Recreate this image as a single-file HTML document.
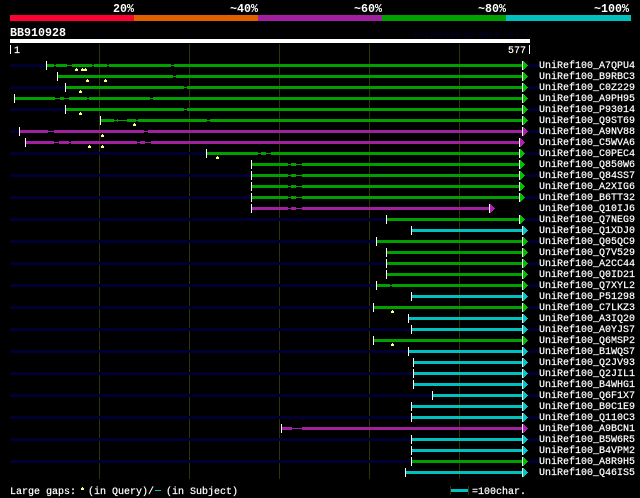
<!DOCTYPE html>
<html><head><meta charset="utf-8"><style>
html,body{margin:0;padding:0;background:#000;width:640px;height:498px;overflow:hidden}
svg{display:block;position:absolute;left:0;top:0}
text{font-family:"Liberation Mono",monospace;font-size:10px;fill:#fff;stroke:#fff;stroke-width:.2px}
text.b{font-weight:bold;font-size:11.67px;stroke:none}
.N{fill:#000033}.G{fill:#00a000}.P{fill:#a020a0}.C{fill:#00c0c0}
.g{fill:#00c000}.p{fill:#b020b0}.c{fill:#00c8c8}
</style></head><body>
<svg width="640" height="498" viewBox="0 0 640 498" xmlns="http://www.w3.org/2000/svg">
<defs>
<rect id="k" y="-3" width="1" height="9" fill="#fff"/>
<path id="t" d="M0-3H1V-2H2V-1H3V0H4V1H5V2H4V3H3V4H2V5H1V6H0z"/>
<path id="w" d="M1 4H2V5H3V7H0V5H1z" fill="#ffff70"/>
</defs>
<rect x="10" y="15" width="124" height="6" fill="#ff0033"/>
<rect x="134" y="15" width="124" height="6" fill="#e06000"/>
<rect x="258" y="15" width="124" height="6" fill="#a020a0"/>
<rect x="382" y="15" width="124" height="6" fill="#00a000"/>
<rect x="506" y="15" width="125" height="6" fill="#00c0c0"/>
<text class="b" x="113" y="12">20%</text>
<text class="b" x="230" y="12">~40%</text>
<text class="b" x="354" y="12">~60%</text>
<text class="b" x="478" y="12">~80%</text>
<text class="b" x="594" y="12">~100%</text>
<text class="b" x="10" y="36">BB910928</text>
<text x="414" y="37" style="font-size:8.33px;fill:#000033;stroke:none">AlignView.pm Beta rel.7</text>
<rect x="10" y="39" width="520" height="4" fill="#fff"/>
<rect x="10" y="45" width="1" height="9" fill="#fff"/>
<rect x="529" y="45" width="1" height="9" fill="#fff"/>
<text x="14" y="53">1</text>
<text x="508" y="53">577</text>
<g fill="#333300">
<rect x="99" y="44" width="1" height="435"/><rect x="189" y="44" width="1" height="435"/><rect x="279" y="44" width="1" height="435"/><rect x="369" y="44" width="1" height="435"/><rect x="459" y="44" width="1" height="435"/>
</g>

<g transform="translate(0,64)"><path class="N" d="M10 0H46V3H10zM528 0H539V3H528z"/><path class="G" d="M47 1H174V2H47zM47 0H54V3H47zM56 0H67V3H56zM72 0H92V3H72zM94 0H107V3H94zM109 0H171V3H109zM174 0H522V3H174z"/><use href="#k" x="46"/><use href="#k" x="522"/><use href="#t" x="523" class="g"/><use href="#w" x="75"/><use href="#w" x="81"/><use href="#w" x="84"/><text x="539" y="4">UniRef100_A7QPU4</text></g>
<g transform="translate(0,75)"><path class="G" d="M173 1H176V2H173zM58 0H173V3H58zM176 0H522V3H176z"/><use href="#k" x="57"/><use href="#k" x="522"/><use href="#t" x="523" class="g"/><use href="#w" x="86"/><use href="#w" x="104"/><text x="539" y="4">UniRef100_B9RBC3</text></g>
<g transform="translate(0,86)"><path class="N" d="M10 0H65V3H10zM528 0H539V3H528z"/><path class="G" d="M184 1H187V2H184zM66 0H184V3H66zM187 0H522V3H187z"/><use href="#k" x="65"/><use href="#k" x="522"/><use href="#t" x="523" class="g"/><use href="#w" x="79"/><text x="539" y="4">UniRef100_C0Z229</text></g>
<g transform="translate(0,97)"><path class="G" d="M55 1H153V2H55zM15 0H55V3H15zM60 0H64V3H60zM69 0H87V3H69zM89 0H150V3H89zM153 0H522V3H153z"/><use href="#k" x="14"/><use href="#k" x="522"/><use href="#t" x="523" class="g"/><text x="539" y="4">UniRef100_A9PH95</text></g>
<g transform="translate(0,108)"><path class="N" d="M10 0H65V3H10zM528 0H539V3H528z"/><path class="G" d="M184 1H187V2H184zM66 0H184V3H66zM187 0H522V3H187z"/><use href="#k" x="65"/><use href="#k" x="522"/><use href="#t" x="523" class="g"/><use href="#w" x="79"/><text x="539" y="4">UniRef100_P93014</text></g>
<g transform="translate(0,119)"><path class="G" d="M114 1H210V2H114zM101 0H114V3H101zM117 0H118V3H117zM127 0H136V3H127zM138 0H207V3H138zM210 0H522V3H210z"/><use href="#k" x="100"/><use href="#k" x="522"/><use href="#t" x="523" class="g"/><use href="#w" x="133"/><text x="539" y="4">UniRef100_Q9ST69</text></g>
<g transform="translate(0,130)"><path class="N" d="M10 0H19V3H10zM528 0H539V3H528z"/><path class="P" d="M48 1H148V2H48zM20 0H48V3H20zM54 0H144V3H54zM148 0H522V3H148z"/><use href="#k" x="19"/><use href="#k" x="522"/><use href="#t" x="523" class="p"/><use href="#w" x="101"/><text x="539" y="4">UniRef100_A9NV88</text></g>
<g transform="translate(0,141)"><path class="P" d="M54 1H151V2H54zM26 0H54V3H26zM59 0H69V3H59zM71 0H137V3H71zM140 0H145V3H140zM151 0H519V3H151z"/><use href="#k" x="25"/><use href="#k" x="519"/><use href="#t" x="520" class="p"/><use href="#w" x="88"/><use href="#w" x="101"/><text x="539" y="4">UniRef100_C5WVA6</text></g>
<g transform="translate(0,152)"><path class="N" d="M10 0H206V3H10zM525 0H539V3H525z"/><path class="G" d="M258 1H271V2H258zM207 0H258V3H207zM261 0H266V3H261zM271 0H519V3H271z"/><use href="#k" x="206"/><use href="#k" x="519"/><use href="#t" x="520" class="g"/><use href="#w" x="216"/><text x="539" y="4">UniRef100_C0PEC4</text></g>
<g transform="translate(0,163)"><path class="G" d="M288 1H302V2H288zM252 0H288V3H252zM291 0H296V3H291zM302 0H519V3H302z"/><use href="#k" x="251"/><use href="#k" x="519"/><use href="#t" x="520" class="g"/><text x="539" y="4">UniRef100_Q850W6</text></g>
<g transform="translate(0,174)"><path class="N" d="M10 0H251V3H10zM525 0H539V3H525z"/><path class="G" d="M288 1H302V2H288zM252 0H288V3H252zM291 0H296V3H291zM302 0H519V3H302z"/><use href="#k" x="251"/><use href="#k" x="519"/><use href="#t" x="520" class="g"/><text x="539" y="4">UniRef100_Q84SS7</text></g>
<g transform="translate(0,185)"><path class="G" d="M288 1H302V2H288zM252 0H288V3H252zM291 0H296V3H291zM302 0H519V3H302z"/><use href="#k" x="251"/><use href="#k" x="519"/><use href="#t" x="520" class="g"/><text x="539" y="4">UniRef100_A2XIG6</text></g>
<g transform="translate(0,196)"><path class="N" d="M10 0H251V3H10zM525 0H539V3H525z"/><path class="G" d="M288 1H302V2H288zM252 0H288V3H252zM291 0H296V3H291zM302 0H519V3H302z"/><use href="#k" x="251"/><use href="#k" x="519"/><use href="#t" x="520" class="g"/><text x="539" y="4">UniRef100_B6TT32</text></g>
<g transform="translate(0,207)"><path class="P" d="M288 1H302V2H288zM252 0H288V3H252zM291 0H296V3H291zM302 0H489V3H302z"/><use href="#k" x="251"/><use href="#k" x="489"/><use href="#t" x="490" class="p"/><text x="539" y="4">UniRef100_Q10IJ6</text></g>
<g transform="translate(0,218)"><path class="N" d="M10 0H386V3H10zM525 0H539V3H525z"/><path class="G" d="M387 0H519V3H387z"/><use href="#k" x="386"/><use href="#k" x="519"/><use href="#t" x="520" class="g"/><text x="539" y="4">UniRef100_Q7NEG9</text></g>
<g transform="translate(0,229)"><path class="C" d="M412 0H522V3H412z"/><use href="#k" x="411"/><use href="#k" x="522"/><use href="#t" x="523" class="c"/><text x="539" y="4">UniRef100_Q1XDJ0</text></g>
<g transform="translate(0,240)"><path class="N" d="M10 0H376V3H10zM528 0H539V3H528z"/><path class="G" d="M377 0H522V3H377z"/><use href="#k" x="376"/><use href="#k" x="522"/><use href="#t" x="523" class="g"/><text x="539" y="4">UniRef100_Q05QC9</text></g>
<g transform="translate(0,251)"><path class="G" d="M387 0H522V3H387z"/><use href="#k" x="386"/><use href="#k" x="522"/><use href="#t" x="523" class="g"/><text x="539" y="4">UniRef100_Q7V529</text></g>
<g transform="translate(0,262)"><path class="N" d="M10 0H386V3H10zM528 0H539V3H528z"/><path class="G" d="M387 0H522V3H387z"/><use href="#k" x="386"/><use href="#k" x="522"/><use href="#t" x="523" class="g"/><text x="539" y="4">UniRef100_A2CC44</text></g>
<g transform="translate(0,273)"><path class="G" d="M387 0H522V3H387z"/><use href="#k" x="386"/><use href="#k" x="522"/><use href="#t" x="523" class="g"/><text x="539" y="4">UniRef100_Q0ID21</text></g>
<g transform="translate(0,284)"><path class="N" d="M10 0H376V3H10zM528 0H539V3H528z"/><path class="G" d="M390 1H392V2H390zM377 0H390V3H377zM392 0H522V3H392z"/><use href="#k" x="376"/><use href="#k" x="522"/><use href="#t" x="523" class="g"/><text x="539" y="4">UniRef100_Q7XYL2</text></g>
<g transform="translate(0,295)"><path class="C" d="M412 0H522V3H412z"/><use href="#k" x="411"/><use href="#k" x="522"/><use href="#t" x="523" class="c"/><text x="539" y="4">UniRef100_P51298</text></g>
<g transform="translate(0,306)"><path class="N" d="M10 0H373V3H10zM528 0H539V3H528z"/><path class="G" d="M374 0H522V3H374z"/><use href="#k" x="373"/><use href="#k" x="522"/><use href="#t" x="523" class="g"/><use href="#w" x="391"/><text x="539" y="4">UniRef100_C7LKZ3</text></g>
<g transform="translate(0,317)"><path class="C" d="M409 0H522V3H409z"/><use href="#k" x="408"/><use href="#k" x="522"/><use href="#t" x="523" class="c"/><text x="539" y="4">UniRef100_A3IQ20</text></g>
<g transform="translate(0,328)"><path class="N" d="M10 0H411V3H10zM528 0H539V3H528z"/><path class="C" d="M412 0H522V3H412z"/><use href="#k" x="411"/><use href="#k" x="522"/><use href="#t" x="523" class="c"/><text x="539" y="4">UniRef100_A0YJS7</text></g>
<g transform="translate(0,339)"><path class="G" d="M374 0H522V3H374z"/><use href="#k" x="373"/><use href="#k" x="522"/><use href="#t" x="523" class="g"/><use href="#w" x="391"/><text x="539" y="4">UniRef100_Q6MSP2</text></g>
<g transform="translate(0,350)"><path class="N" d="M10 0H408V3H10zM528 0H539V3H528z"/><path class="C" d="M409 0H522V3H409z"/><use href="#k" x="408"/><use href="#k" x="522"/><use href="#t" x="523" class="c"/><text x="539" y="4">UniRef100_B1WQS7</text></g>
<g transform="translate(0,361)"><path class="C" d="M414 0H522V3H414z"/><use href="#k" x="413"/><use href="#k" x="522"/><use href="#t" x="523" class="c"/><text x="539" y="4">UniRef100_Q2JV93</text></g>
<g transform="translate(0,372)"><path class="N" d="M10 0H413V3H10zM528 0H539V3H528z"/><path class="C" d="M414 0H522V3H414z"/><use href="#k" x="413"/><use href="#k" x="522"/><use href="#t" x="523" class="c"/><text x="539" y="4">UniRef100_Q2JIL1</text></g>
<g transform="translate(0,383)"><path class="C" d="M414 0H522V3H414z"/><use href="#k" x="413"/><use href="#k" x="522"/><use href="#t" x="523" class="c"/><text x="539" y="4">UniRef100_B4WHG1</text></g>
<g transform="translate(0,394)"><path class="N" d="M10 0H432V3H10zM528 0H539V3H528z"/><path class="C" d="M433 0H522V3H433z"/><use href="#k" x="432"/><use href="#k" x="522"/><use href="#t" x="523" class="c"/><text x="539" y="4">UniRef100_Q6F1X7</text></g>
<g transform="translate(0,405)"><path class="C" d="M412 0H522V3H412z"/><use href="#k" x="411"/><use href="#k" x="522"/><use href="#t" x="523" class="c"/><text x="539" y="4">UniRef100_B0C1E9</text></g>
<g transform="translate(0,416)"><path class="N" d="M10 0H411V3H10zM528 0H539V3H528z"/><path class="C" d="M412 0H522V3H412z"/><use href="#k" x="411"/><use href="#k" x="522"/><use href="#t" x="523" class="c"/><text x="539" y="4">UniRef100_Q110C3</text></g>
<g transform="translate(0,427)"><path class="P" d="M292 1H302V2H292zM282 0H292V3H282zM302 0H522V3H302z"/><use href="#k" x="281"/><use href="#k" x="522"/><use href="#t" x="523" class="p"/><text x="539" y="4">UniRef100_A9BCN1</text></g>
<g transform="translate(0,438)"><path class="N" d="M10 0H411V3H10zM528 0H539V3H528z"/><path class="C" d="M412 0H522V3H412z"/><use href="#k" x="411"/><use href="#k" x="522"/><use href="#t" x="523" class="c"/><text x="539" y="4">UniRef100_B5W6R5</text></g>
<g transform="translate(0,449)"><path class="C" d="M412 0H522V3H412z"/><use href="#k" x="411"/><use href="#k" x="522"/><use href="#t" x="523" class="c"/><text x="539" y="4">UniRef100_B4VPM2</text></g>
<g transform="translate(0,460)"><path class="N" d="M10 0H411V3H10zM528 0H539V3H528z"/><path class="G" d="M412 0H522V3H412z"/><use href="#k" x="411"/><use href="#k" x="522"/><use href="#t" x="523" class="g"/><text x="539" y="4">UniRef100_A8R9H5</text></g>
<g transform="translate(0,471)"><path class="C" d="M406 0H522V3H406z"/><use href="#k" x="405"/><use href="#k" x="522"/><use href="#t" x="523" class="c"/><text x="539" y="4">UniRef100_Q46IS5</text></g>

<text x="10" y="494">Large gaps:</text>
<use href="#w" x="81" y="483"/>
<text x="88" y="494">(in Query)/</text>
<rect x="155" y="490" width="6" height="1" fill="#00c0c0"/>
<text x="166" y="494">(in Subject)</text>
<rect x="450" y="486" width="1" height="9" fill="#333300"/>
<rect x="468" y="486" width="1" height="9" fill="#333300"/>
<rect x="451" y="489" width="17" height="3" fill="#00c0c0"/>
<text x="472" y="494">=100char.</text>
</svg>
</body></html>
